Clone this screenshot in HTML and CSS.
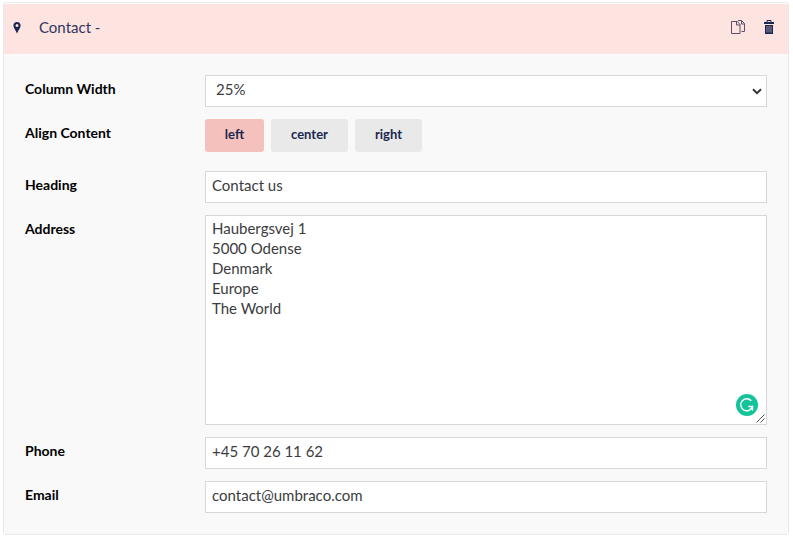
FILE: index.html
```html
<!DOCTYPE html>
<html lang="en">
<head>
<meta charset="utf-8">
<title>Contact</title>
<link rel="stylesheet" href="styles.css">
</head>
<body>
<section class="card">
  <header class="head">
    <svg class="pin" width="8" height="12" viewBox="0 0 8 12"><path fill="#1b264f" fill-rule="evenodd" d="M4 0C1.800 0 .4 1.600.4 3.600.4 6 2.500 8 4 11.500 5.500 8 7.600 6 7.600 3.600 7.600 1.600 6.200 0 4 0zM4 2.100a1.500 1.500 0 1 1 0 3 1.500 1.500 0 0 1 0-3z"/></svg>
    <span class="title">Contact -</span>
    <svg class="copy" width="16" height="16" viewBox="0 0 16 16" fill="none" stroke="#5d5068" stroke-width="1"><path d="M1.500 2.500H7.500l2.500 3v9H1.500zM6.500 2.500v3.500H10M8 1.500h3.500l3 3v8H11.500M11.500 1.500v3.500h3"/></svg>
    <svg class="trash" width="10" height="14" viewBox="0 0 10 14"><path d="M3 2V.500h4V2" fill="none" stroke="#1b264f"/><path fill="#1b264f" d="M0 2h10v2H0zM1 5h8v9H1z"/><path d="M3 6v6.500M5 6v6.500M7 6v6.500" stroke="#a999ac" stroke-width=".9"/></svg>
  </header>
  <div class="form">
    <div class="row"><label>Column Width</label><div class="field select"><span>25%</span><svg width="10" height="7" viewBox="0 0 10 7"><path d="M1 1.200l4 3.900 4-3.900" fill="none" stroke="#333" stroke-width="2"/></svg></div></div>
    <div class="row align"><label>Align Content</label><div class="buttons"><button class="btn active">left</button><button class="btn center">center</button><button class="btn right">right</button></div></div>
    <div class="row"><label>Heading</label><div class="field">Contact us</div></div>
    <div class="row"><label>Address</label><div class="field area">Haubergsvej 1
5000 Odense
Denmark
Europe
The World<svg class="badge" width="22" height="22" viewBox="0 0 22 22"><circle cx="11" cy="11" r="11" fill="#15c39a"/><path d="M15.300 6.800A6 6 0 1 0 16.500 12.500H12.300M16.500 12v4.500" fill="none" stroke="#fff" stroke-width="1.400"/></svg><svg class="grip" width="9" height="9" viewBox="0 0 9 9"><path d="M.5 8.500l8-8M4.500 8.500l4-4" stroke="#555" stroke-width="1"/></svg></div></div>
    <div class="row"><label>Phone</label><div class="field">+45 70 26 11 62</div></div>
    <div class="row"><label>Email</label><div class="field">contact@umbraco.com</div></div>
  </div>
</section>
</body>
</html>
```
FILE: styles.css
```css
* { box-sizing: border-box; }
body {
  margin: 0;
  padding: 2px 4px 0 3px;
  background: #fff;
  font-family: Lato, sans-serif;
  font-size: 15px;
  line-height: 20px;
  color: #3c3c40;
}
.card {
  height: 533px;
  padding-top: 1px;
  border: 1px solid #e9e9eb;
  border-radius: 3px;
}
.head {
  display: flex;
  align-items: center;
  height: 50px;
  padding: 0 14px 0 9px;
  background: #fee4e1;
  color: #2e375d;
}
.pin { margin-bottom: 2px; }
.title {
  flex: 1;
  margin-left: 18px;
  padding-bottom: 4px;
}
.copy { margin-right: 18px; margin-bottom: 4px; }
.trash { margin-bottom: 4px; }
.form {
  display: flex;
  flex-direction: column;
  gap: 12px;
  height: 480px;
  padding: 21px 21px 0;
  background: #f9f9f9;
}
.row { display: flex; }
.row label {
  width: 180px;
  padding-top: 4px;
  font-size: 14px;
  font-weight: 700;
  color: #000;
}
.field {
  position: relative;
  flex: 1;
  height: 32px;
  padding: 3px 6px;
  border: 1px solid #d8d7d9;
  background: #fff;
  white-space: pre-line;
}
.select {
  display: flex;
  justify-content: space-between;
  padding: 3px 4px 3px 10px;
}
.select svg { margin-top: 9px; }
.align { height: 40px; }
.buttons { display: flex; gap: 7px; }
.btn {
  width: 59px;
  height: 33px;
  padding: 0 0 4px;
  border: 0;
  border-radius: 3px;
  background: #e9e9e9;
  font: 700 13px/20px Lato, sans-serif;
  color: #1b264f;
}
.active { background: #f5c1bc; }
.center { width: 77px; }
.right { width: 67px; }
.area { height: 210px; padding-top: 2px; }
.badge { position: absolute; right: 8px; bottom: 8px; }
.grip { position: absolute; right: 1px; bottom: 1px; }
```
